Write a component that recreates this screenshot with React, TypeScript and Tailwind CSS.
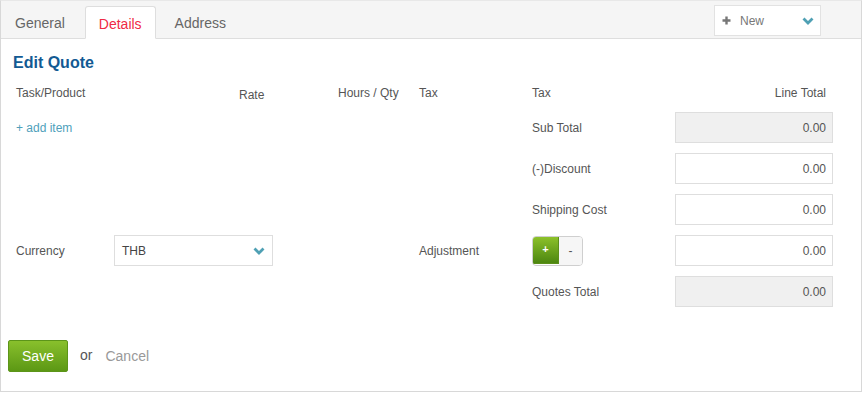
import React from "react";

const Chevron = ({ className = "" }: { className?: string }) => (
  <svg width="12" height="8" viewBox="0 0 12 8" className={className}>
    <path d="M1.5 1.5 L6 6 L10.5 1.5" fill="none" stroke="#4fa0b4" strokeWidth="2.8" strokeLinecap="butt" />
  </svg>
);

const Field = ({ gray = false }: { gray?: boolean }) => (
  <div
    className={`w-[158px] h-[31px] border border-[#dedede] flex items-center justify-end pr-[6px] text-[12px] text-[#555] ${
      gray ? "bg-[#f0f0f0]" : "bg-white"
    }`}
  >
    0.00
  </div>
);

export default function App() {
  return (
    <div
      className="w-[862px] h-[392px] border border-[#d8d8d8] border-t-[#e8e8e8] bg-white flex flex-col"
      style={{ fontFamily: '"Liberation Sans", Arial, sans-serif' }}
    >
      {/* Tab bar */}
      <div className="h-[38px] bg-[#f5f5f5] border-b border-[#dedede] flex items-end relative">
        <div className="flex items-end h-full pl-[14px] text-[14px]">
          <div className="h-[32px] pt-[3px] flex items-center text-[#666] pr-[20px]">General</div>
          <div className="h-[33px] pt-[3px] -mb-px px-[13px] flex items-center bg-white border border-[#dedede] border-b-white rounded-t-[3px] text-[#ef2a45]">
            Details
          </div>
          <div className="h-[32px] pt-[3px] flex items-center text-[#666] pl-[19px]">Address</div>
        </div>
        <div className="absolute left-[713px] top-[4px] w-[107px] h-[31px] bg-white border border-[#e2e2e2] flex items-center pl-[7px] pr-[6px]">
          <svg width="9" height="9" viewBox="0 0 9 9">
            <path d="M4.5 0.5 V8.5 M0.5 4.5 H8.5" stroke="#777" strokeWidth="2.4" />
          </svg>
          <span className="ml-[9px] text-[12px] text-[#777]">New</span>
          <Chevron className="ml-auto" />
        </div>
      </div>

      {/* Content */}
      <div className="flex flex-col pl-[15px]">
        <div className="mt-[14px] -ml-[3px] h-[20px] leading-[20px] text-[16px] font-bold text-[#135a93]">
          Edit Quote
        </div>

        <div className="mt-[12px] flex text-[12px] text-[#555] h-[16px] leading-[16px]">
          <div className="w-[223px]">Task/Product</div>
          <div className="w-[99px] pt-[2px]">Rate</div>
          <div className="w-[81px]">Hours / Qty</div>
          <div className="w-[113px]">Tax</div>
          <div className="w-[143px]">Tax</div>
          <div className="w-[158px] text-right pr-[7px]">Line Total</div>
        </div>

        <div className="mt-[11px] flex flex-col gap-[10px] text-[12px] text-[#555]">
          <div className="flex items-center h-[31px]">
            <div className="w-[516px] text-[#4f9fbb]">+ add item</div>
            <div className="w-[143px]">Sub Total</div>
            <Field gray />
          </div>
          <div className="flex items-center h-[31px]">
            <div className="w-[516px]" />
            <div className="w-[143px]">(-)Discount</div>
            <Field />
          </div>
          <div className="flex items-center h-[31px]">
            <div className="w-[516px]" />
            <div className="w-[143px]">Shipping Cost</div>
            <Field />
          </div>
          <div className="flex items-center h-[31px]">
            <div className="w-[98px]">Currency</div>
            <div className="w-[159px] h-[31px] border border-[#dedede] bg-white flex items-center pl-[7px] pr-[7px]">
              <span className="text-[12px] text-[#444]">THB</span>
              <Chevron className="ml-auto" />
            </div>
            <div className="w-[146px]" />
            <div className="w-[113px]">Adjustment</div>
            <div className="w-[143px]">
              <div className="flex w-[51px] h-[30px] rounded-[4px] overflow-hidden border border-[#cfcfcf]">
                <div className="w-[27px] h-full bg-gradient-to-b from-[#8cc12a] to-[#4d8710] flex items-center justify-center text-white font-bold text-[11px] -my-px -ml-px border border-[#5b8f1a]">
                  +
                </div>
                <div className="flex-1 bg-[#f6f6f6] flex items-center justify-center text-[#555] text-[12px]">-</div>
              </div>
            </div>
            <Field />
          </div>
          <div className="flex items-center h-[31px]">
            <div className="w-[516px]" />
            <div className="w-[143px]">Quotes Total</div>
            <Field gray />
          </div>
        </div>
      </div>

      <div className="mt-[33px] pl-[7px] flex items-center">
        <button className="w-[60px] h-[32px] rounded-[2px] bg-gradient-to-b from-[#89c02c] to-[#5c9814] border border-[#5c9519] text-white text-[14px]">
          Save
        </button>
        <span className="ml-[12px] text-[14px] text-[#555] -mt-[2px]">or</span>
        <span className="ml-[13px] text-[14px] text-[#999]">Cancel</span>
      </div>
    </div>
  );
}
